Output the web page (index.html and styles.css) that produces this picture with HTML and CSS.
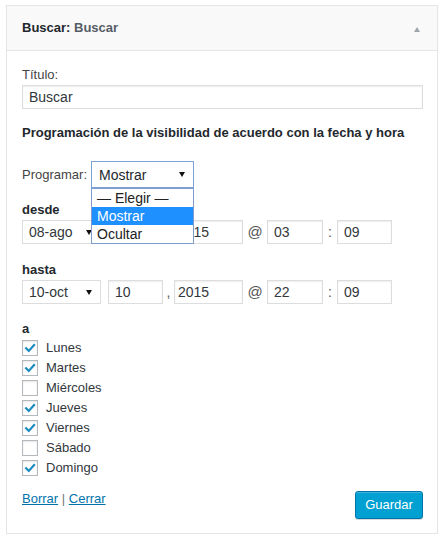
FILE: index.html
```html
<!DOCTYPE html>
<html lang="es">
<head>
<meta charset="utf-8">
<title>Buscar</title>
<link rel="stylesheet" href="styles.css">
</head>
<body>
<div class="widget">
  <div class="widget-top">
    <h3 class="widget-title">Buscar: <span class="in-title">Buscar</span></h3>
    <span class="toggle"></span>
  </div>
  <div class="widget-inside">
    <label class="lbl">Título:</label>
    <div class="text-input wide">Buscar</div>

    <h4 class="section-title">Programación de la visibilidad de acuerdo con la fecha y hora</h4>

    <div class="prog-row">
      <span class="prog-label">Programar:</span>
      <div class="select-wrap">
        <div class="select focus"><span>Mostrar</span><i class="caret"></i></div>
        <ul class="dropdown">
          <li>— Elegir —</li>
          <li class="hl">Mostrar</li>
          <li>Ocultar</li>
        </ul>
      </div>
    </div>

    <div class="bold-label first">desde</div>
    <div class="date-row">
      <div class="select month"><span>08-ago</span><i class="caret"></i></div>
      <div class="text-input day">10</div>
      <span class="sep comma">,</span>
      <div class="text-input year">2015</div>
      <span class="sep at">@</span>
      <div class="text-input hour">03</div>
      <span class="sep colon">:</span>
      <div class="text-input min">09</div>
    </div>

    <div class="bold-label">hasta</div>
    <div class="date-row">
      <div class="select month"><span>10-oct</span><i class="caret"></i></div>
      <div class="text-input day">10</div>
      <span class="sep comma">,</span>
      <div class="text-input year">2015</div>
      <span class="sep at">@</span>
      <div class="text-input hour">22</div>
      <span class="sep colon">:</span>
      <div class="text-input min">09</div>
    </div>

    <div class="bold-label days-label">a</div>
    <ul class="days">
      <li><span class="cb on"><svg viewBox="0 0 16 16"><polyline points="3.6,8.4 6.6,11.4 12.6,4.8"/></svg></span>Lunes</li>
      <li><span class="cb on"><svg viewBox="0 0 16 16"><polyline points="3.6,8.4 6.6,11.4 12.6,4.8"/></svg></span>Martes</li>
      <li><span class="cb"></span>Miércoles</li>
      <li><span class="cb on"><svg viewBox="0 0 16 16"><polyline points="3.6,8.4 6.6,11.4 12.6,4.8"/></svg></span>Jueves</li>
      <li><span class="cb on"><svg viewBox="0 0 16 16"><polyline points="3.6,8.4 6.6,11.4 12.6,4.8"/></svg></span>Viernes</li>
      <li><span class="cb"></span>Sábado</li>
      <li><span class="cb on"><svg viewBox="0 0 16 16"><polyline points="3.6,8.4 6.6,11.4 12.6,4.8"/></svg></span>Domingo</li>
    </ul>

    <div class="actions">
      <div class="links"><a href="#">Borrar</a> <span class="pipe">|</span> <a href="#">Cerrar</a></div>
      <button class="btn-primary" type="button">Guardar</button>
    </div>
  </div>
</div>
</body>
</html>
```

FILE: styles.css
```css
* { box-sizing: border-box; }
html, body { background: #fff; }
body {
  margin: 0;
  padding: 5px 0 0 6px;
  font-family: "Liberation Sans", Arial, sans-serif;
  font-size: 13px;
  line-height: 18px;
  color: #444;
}
.widget {
  width: 432px;
  border: 1px solid #e5e5e5;
  background: #fff;
  box-shadow: 0 1px 1px rgba(0,0,0,.04);
}
.widget-top {
  height: 45px;
  background: #f9f9f9;
  border-bottom: 1px solid #e5e5e5;
  display: flex;
  align-items: center;
  justify-content: space-between;
  padding: 0 17px 0 15px;
}
.widget-title {
  margin: 0;
  font-size: 13px;
  font-weight: bold;
  color: #23282d;
  line-height: 18px;
}
.in-title { color: #555d66; }
.toggle {
  width: 0; height: 0;
  border-left: 3.5px solid transparent;
  border-right: 3.5px solid transparent;
  border-bottom: 5px solid #a0a5aa;
  margin-top: 2px;
}
.widget-inside {
  padding: 15px 14px 14px 15px;
}
.lbl { display: block; color: #444; }
.text-input {
  height: 24px;
  border: 1px solid #ddd;
  background: #fff;
  box-shadow: inset 0 1px 2px rgba(0,0,0,.07);
  font-size: 14px;
  line-height: 22px;
  color: #32373c;
  padding: 0 6px;
  white-space: nowrap;
  overflow: hidden;
}
.text-input.wide { margin-top: 1px; width: 100%; }
.section-title {
  margin: 15px 0 0;
  font-size: 13px;
  font-weight: bold;
  color: #23282d;
  line-height: 18px;
}
.prog-row {
  margin-top: 19px;
  display: flex;
  align-items: center;
  height: 27px;
}
.prog-label { margin-right: 4px; color: #444; }
.select-wrap { position: relative; }
.select {
  display: flex;
  align-items: center;
  justify-content: space-between;
  border: 1px solid #ddd;
  background: #fff;
  font-size: 14px;
  color: #32373c;
  height: 24px;
  padding: 0 8px 0 6px;
}
.select.focus {
  width: 103px;
  height: 27px;
  border-color: #7da2d6;
  padding: 0 8px 0 7px;
  color: #23282d;
}
.caret {
  width: 0; height: 0;
  border-left: 3px solid transparent;
  border-right: 3px solid transparent;
  border-top: 5px solid #111;
}
.dropdown {
  position: absolute;
  left: 0;
  top: 100%;
  width: 103px;
  margin: 0;
  padding: 0;
  list-style: none;
  background: #fff;
  border: 1px solid #7f9ccb;
  font-size: 14px;
  color: #222;
  z-index: 5;
}
.dropdown li {
  height: 18px;
  line-height: 18px;
  padding-left: 5px;
}
.dropdown li.hl { background: #1e90ff; color: #fff; }
.bold-label {
  margin-top: 17px;
  font-weight: bold;
  color: #23282d;
  line-height: 18px;
}
.bold-label.first { margin-top: 13px; }
.date-row {
  display: flex;
  align-items: center;
  margin-top: 1px;
  height: 24px;
}
.select.month { width: 79px; margin-right: 7px; }
.text-input.day { width: 55px; }
.text-input.year { width: 69px; padding-left: 3px; }
.text-input.hour { width: 56px; }
.text-input.min { width: 55px; }
.sep { text-align: center; color: #555; font-size: 14px; }
.sep.comma { width: 11px; }
.sep.at { width: 24px; font-size: 15px; }
.sep.colon { width: 14px; }
.days-label { margin-top: 16px; }
.days { list-style: none; margin: 0; padding: 0; }
.days li {
  height: 20px;
  display: flex;
  align-items: center;
  color: #32373c;
}
.cb {
  width: 16px; height: 16px;
  border: 1px solid #b4b9be;
  background: #fff;
  box-shadow: inset 0 1px 2px rgba(0,0,0,.1);
  margin-right: 8px;
  display: flex;
}
.cb svg { width: 14px; height: 14px; }
.cb polyline {
  fill: none;
  stroke: #1e8cbe;
  stroke-width: 2.6;
  stroke-linecap: square;
  stroke-linejoin: miter;
}
.actions {
  margin-top: 12px;
  display: flex;
  justify-content: space-between;
  align-items: flex-start;
}
.links a { color: #0073aa; text-decoration: underline; }
.pipe { color: #72777c; }
.btn-primary {
  margin-top: 1px;
  height: 28px;
  width: 68px;
  padding: 0;
  background: #00a0d2;
  border: 1px solid #0073aa;
  border-radius: 3px;
  box-shadow: inset 0 1px 0 rgba(120,200,230,.5), 0 1px 0 rgba(0,0,0,.15);
  color: #fff;
  font-family: "Liberation Sans", Arial, sans-serif;
  font-size: 13px;
  line-height: 26px;
}
```
